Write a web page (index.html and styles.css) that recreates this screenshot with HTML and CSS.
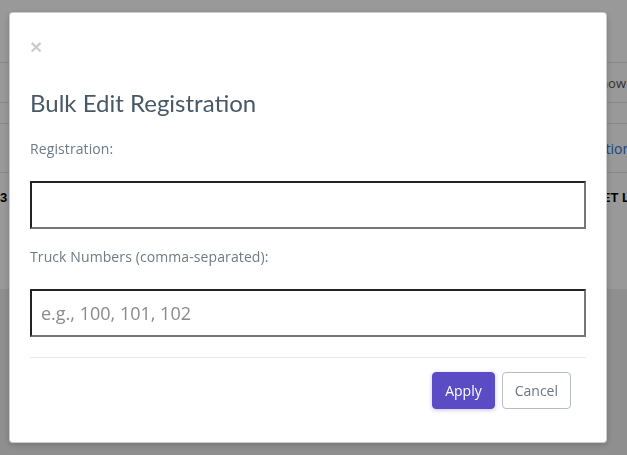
FILE: index.html
```html
<!DOCTYPE html>
<html lang="en">
<head>
<meta charset="UTF-8">
<meta name="viewport" content="width=device-width, initial-scale=1.0">
<title>Bulk Edit Registration</title>
<link rel="stylesheet" href="styles.css">
</head>
<body>

<div class="page">
  <div class="topbar"></div>
  <div class="toolbar">
    <div></div>
    <div class="toolbar-action">Show</div>
  </div>
  <div class="spacer"></div>
  <div class="table-head">
    <div></div>
    <div class="head-link">Action</div>
  </div>
  <div class="table-row">
    <div class="cell-num">3</div>
    <div class="cell-name">SHEET LIST</div>
  </div>
</div>

<div class="overlay">
  <div class="modal">
    <button type="button" class="close">&times;</button>
    <h2 class="modal-title">Bulk Edit Registration</h2>

    <label for="registration" class="field-label">Registration:</label>
    <input type="text" id="registration" class="field-input">

    <label for="trucks" class="field-label field-label-second">Truck Numbers (comma-separated):</label>
    <input type="text" id="trucks" class="field-input" placeholder="e.g., 100, 101, 102">

    <div class="modal-footer">
      <button type="button" class="btn btn-primary">Apply</button>
      <button type="button" class="btn btn-default">Cancel</button>
    </div>
  </div>
</div>

</body>
</html>
```

FILE: styles.css
```css
html, body {
  margin: 0;
  padding: 0;
  height: 100%;
  overflow: hidden;
}

body {
  font-family: "Open Sans", Arial, sans-serif;
  background-color: #eeeeee;
}

/* page behind the modal */
.page {
  width: 700px;
  background-color: #fff;
}

.topbar {
  height: 62px;
}

.toolbar {
  display: grid;
  grid-template-columns: 593px 1fr;
  height: 39px;
  border-top: 1px solid #e3e3e3;
  border-bottom: 1px solid #e3e3e3;
  align-items: center;
}

.toolbar-action {
  font-size: 13px;
  color: #555;
}

.spacer {
  height: 20px;
}

.table-head {
  display: grid;
  grid-template-columns: 590px 1fr;
  height: 48px;
  border-top: 1px solid #e3e3e3;
  border-bottom: 1px solid #e3e3e3;
  align-items: center;
}

.head-link {
  font-size: 14px;
  color: #1f74d8;
}

.table-row {
  display: grid;
  grid-template-columns: 575px 1fr;
  height: 116px;
  padding-top: 17px;
  box-sizing: border-box;
  font-family: "Liberation Sans", Arial, sans-serif;
  font-weight: bold;
  font-size: 13px;
  color: #000;
}

/* modal */
.overlay {
  position: fixed;
  top: 0;
  left: 0;
  right: 0;
  bottom: 0;
  background-color: rgba(0, 0, 0, 0.4);
}

.modal {
  width: 598px;
  margin: 12px 0 0 9px;
  padding: 0 20px 18px;
  box-sizing: border-box;
  background-color: #fff;
  border: 1px solid rgba(0, 0, 0, 0.2);
  border-radius: 4px;
  box-shadow: 0 2px 6px rgba(0, 0, 0, 0.2);
}

.close {
  display: block;
  margin-top: 23px;
  padding: 0;
  background: transparent;
  border: none;
  font-family: "Liberation Sans", Arial, sans-serif;
  font-size: 21px;
  font-weight: bold;
  line-height: 21px;
  color: #000;
  opacity: 0.2;
  cursor: pointer;
}

.modal-title {
  margin: 32px 0 0;
  font-family: Lato, "Open Sans", sans-serif;
  font-size: 24px;
  font-weight: normal;
  line-height: 28px;
  color: #475866;
}

.field-label {
  display: block;
  margin-top: 23px;
  font-size: 14px;
  line-height: 18px;
  letter-spacing: 0.1px;
  color: #6e7a84;
}

.field-label-second {
  margin-top: 19px;
}

.field-input {
  display: block;
  width: 100%;
  height: 48px;
  margin-top: 23px;
  padding: 0 9px;
  box-sizing: border-box;
  border: 2px solid;
  border-color: #222 #767676 #767676 #222;
  font-family: "Open Sans", Arial, sans-serif;
  font-size: 18px;
  color: #333;
  outline: none;
}

.field-input::placeholder {
  color: #8a8a8a;
}

.modal-footer {
  display: flex;
  justify-content: flex-end;
  gap: 7px;
  margin-top: 20px;
  padding: 14px 15px 15px 0;
  border-top: 1px solid #e9e9e9;
}

.btn {
  height: 37px;
  padding: 0 12px;
  border-radius: 4px;
  font-family: "Open Sans", Arial, sans-serif;
  font-size: 14px;
  cursor: pointer;
}

.btn-primary {
  background-color: #5b4cc6;
  border: 1px solid #5b4cc6;
  color: #fff;
  box-shadow: 0 1px 4px rgba(91, 76, 198, 0.35);
}

.btn-default {
  background-color: #fff;
  border: 1px solid #b5bcc3;
  color: #6c757d;
}
```
